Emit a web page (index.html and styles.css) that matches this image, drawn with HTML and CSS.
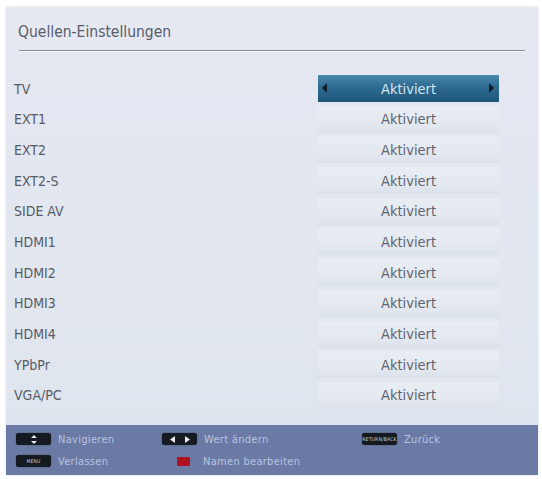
FILE: index.html
```html
<!DOCTYPE html>
<html lang="de">
<head>
<meta charset="utf-8">
<title>Quellen-Einstellungen</title>
<link rel="stylesheet" href="styles.css">
</head>
<body>
<div class="panel">
  <div class="header">
    <h1 class="title">Quellen-Einstellungen</h1>
    <div class="rule"></div>
  </div>
  <ul class="list">
    <li class="row"><span class="label">TV</span><span class="value active"><span class="arr arr-l"></span>Aktiviert<span class="arr arr-r"></span></span></li>
    <li class="row"><span class="label">EXT1</span><span class="value">Aktiviert</span></li>
    <li class="row"><span class="label">EXT2</span><span class="value">Aktiviert</span></li>
    <li class="row"><span class="label">EXT2-S</span><span class="value">Aktiviert</span></li>
    <li class="row"><span class="label">SIDE AV</span><span class="value">Aktiviert</span></li>
    <li class="row"><span class="label">HDMI1</span><span class="value">Aktiviert</span></li>
    <li class="row"><span class="label">HDMI2</span><span class="value">Aktiviert</span></li>
    <li class="row"><span class="label">HDMI3</span><span class="value">Aktiviert</span></li>
    <li class="row"><span class="label">HDMI4</span><span class="value">Aktiviert</span></li>
    <li class="row"><span class="label">YPbPr</span><span class="value">Aktiviert</span></li>
    <li class="row"><span class="label">VGA/PC</span><span class="value">Aktiviert</span></li>
  </ul>
  <div class="footer">
    <div class="fitem"><span class="key"><svg width="8" height="9" viewBox="0 0 8 9"><path d="M4 0 L7 3 H1 Z M4 9 L7 6 H1 Z" fill="#e8e8e8"/></svg></span><span class="ftext">Navigieren</span></div>
    <div class="fitem"><span class="key"><svg width="20" height="7" viewBox="0 0 20 7"><path d="M0 3.5 L5 0 V7 Z M20 3.5 L15 0 V7 Z" fill="#e8e8e8"/></svg></span><span class="ftext">Wert ändern</span></div>
    <div class="fitem"><span class="key key-txt">RETURN/BACK</span><span class="ftext">Zurück</span></div>
    <div class="fitem"><span class="key key-txt">MENU</span><span class="ftext">Verlassen</span></div>
    <div class="fitem"><span class="redkey"></span><span class="ftext">Namen bearbeiten</span></div>
  </div>
</div>
</body>
</html>
```
FILE: styles.css
```css
html, body {
  margin: 0;
  padding: 0;
  background: #ffffff;
}
body {
  padding: 7px 4px 4px 6px;
  font-family: "DejaVu Sans", "Liberation Sans", sans-serif;
  font-stretch: condensed;
}
.panel {
  width: 532px;
  height: 468px;
  display: flex;
  flex-direction: column;
  background: linear-gradient(180deg, #e6e8f2 0%, #e1e6ef 60%, #dee4ed 100%);
  box-shadow: 0 0 2px rgba(120, 130, 150, 0.35);
}
.header {
  padding: 15px 13px 0 12px;
}
.title {
  margin: 0;
  font-size: 15.5px;
  font-weight: normal;
  color: #575c69;
  letter-spacing: 0;
  line-height: 20px;
}
.rule {
  margin: 8px 0 0 1px;
  height: 1px;
  background: #868c97;
  border-bottom: 1px solid #f2f4f8;
}
.list {
  list-style: none;
  margin: 23px 0 0 0;
  padding: 0 39px 0 8px;
  display: flex;
  flex-direction: column;
  gap: 3.7px;
}
.row {
  display: flex;
  align-items: center;
  justify-content: space-between;
  height: 27px;
}
.label {
  font-size: 14px;
  color: #575b66;
}
.value {
  position: relative;
  width: 181px;
  height: 27px;
  display: flex;
  align-items: center;
  justify-content: center;
  font-size: 14.5px;
  color: #5f6470;
  background: linear-gradient(180deg, #e9edf3 0%, #e3e8ef 70%, #dbe1ea 100%);
}
.value.active {
  color: #d6e6f2;
  background: linear-gradient(180deg, #4a88ad 0%, #2d6a91 45%, #1f5678 100%);
}
.arr {
  position: absolute;
  top: 8px;
  width: 0;
  height: 0;
  border-top: 5px solid transparent;
  border-bottom: 5px solid transparent;
}
.arr-l {
  left: 4px;
  border-right: 5px solid #101c28;
}
.arr-r {
  right: 5px;
  border-left: 5px solid #101c28;
}
.footer {
  margin-top: auto;
  height: 50px;
  background: #6a7aa4;
  display: grid;
  grid-template-columns: 146px 200px 1fr;
  grid-template-rows: 22px 22px;
  padding: 3px 0 0 10px;
  box-sizing: border-box;
}
.fitem {
  display: flex;
  align-items: center;
  gap: 7px;
}
.key {
  width: 35px;
  height: 12px;
  border-radius: 3px;
  background: #141a20;
  display: flex;
  align-items: center;
  justify-content: center;
  box-shadow: 0 0 1px #0a0f14;
}
.key-txt {
  font-size: 5px;
  color: #c9d0d8;
  letter-spacing: 0.2px;
}
.redkey {
  width: 13px;
  height: 9px;
  margin-left: 15px;
  margin-right: 6px;
  background: #b0121e;
  border-radius: 1px;
}
.ftext {
  font-size: 11px;
  color: #b7c3e2;
  letter-spacing: 0.3px;
}
```
